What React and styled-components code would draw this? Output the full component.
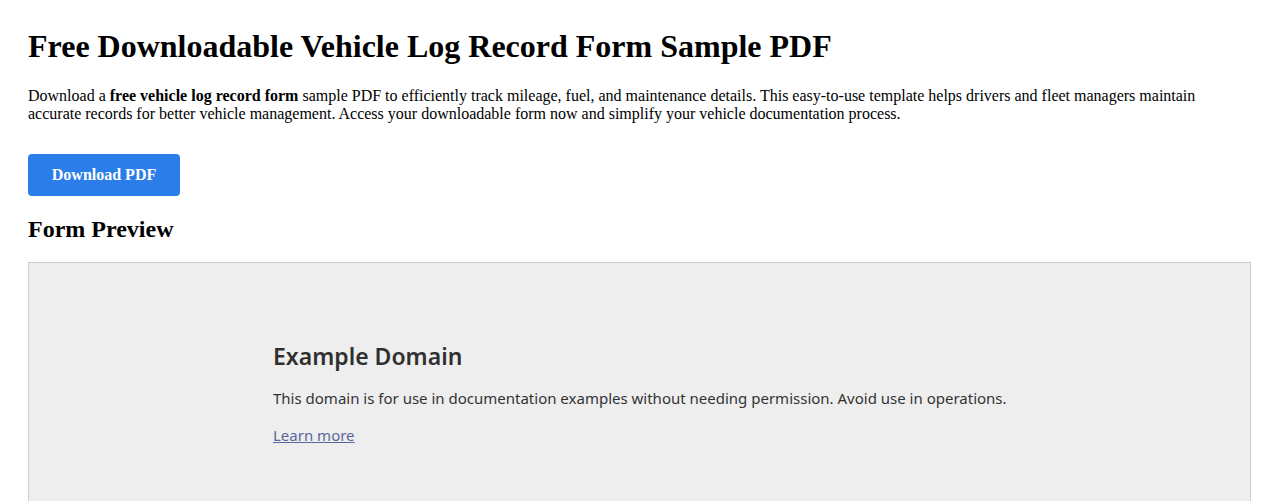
import React from "react";
import styled, { createGlobalStyle } from "styled-components";

const GlobalStyle = createGlobalStyle`
  html, body {
    margin: 0;
    padding: 0;
    background: #fff;
  }
  body {
    font-family: "Liberation Serif", "Times New Roman", serif;
    color: #000;
  }
`;

const App = () => {
  return (
    <>
      <GlobalStyle />
      <Page>
        <Title>Free Downloadable Vehicle Log Record Form Sample PDF</Title>
        <Intro>
          Download a <strong>free vehicle log record form</strong> sample PDF to
          efficiently track mileage, fuel, and maintenance details. This
          easy-to-use template helps drivers and fleet managers maintain
          accurate records for better vehicle management. Access your
          downloadable form now and simplify your vehicle documentation process.
        </Intro>
        <DownloadButton type="button">Download PDF</DownloadButton>
        <SectionTitle>Form Preview</SectionTitle>
        <Preview>
          <PreviewBody>
            <DomainTitle>Example Domain</DomainTitle>
            <DomainText>
              This domain is for use in documentation examples without needing
              permission. Avoid use in operations.
            </DomainText>
            <DomainText>
              <DomainLink href="#">Learn more</DomainLink>
            </DomainText>
          </PreviewBody>
        </Preview>
      </Page>
    </>
  );
};

const Page = styled.main`
  padding: 28px 27px 0 28px;
`;

const Title = styled.h1`
  margin: 0 0 22px;
  font-size: 32px;
  line-height: 37px;
  font-weight: bold;
`;

const Intro = styled.p`
  margin: 0 0 31px;
  font-size: 16px;
  line-height: 18px;
  max-width: 1180px;
`;

const DownloadButton = styled.button`
  display: block;
  width: 152px;
  height: 42px;
  border: none;
  border-radius: 4px;
  background: #2b7de9;
  color: #fff;
  font-family: "Liberation Serif", "Times New Roman", serif;
  font-size: 16px;
  font-weight: bold;
  cursor: pointer;
`;

const SectionTitle = styled.h2`
  margin: 19px 0 19px;
  font-size: 24px;
  line-height: 28px;
  font-weight: bold;
`;

const Preview = styled.div`
  border: 1px solid #ccc;
  background: #eee;
  height: 500px;
  overflow: hidden;
`;

const PreviewBody = styled.div`
  width: 780px;
  margin: 75px 0 0 244px;
  font-family: "Noto Sans", "Open Sans", sans-serif;
  opacity: 0.8;
`;

const DomainTitle = styled.h2`
  margin: 0 0 12px;
  font-size: 23px;
  line-height: 36px;
  font-weight: 600;
  color: #000;
`;

const DomainText = styled.p`
  margin: 0 0 13px;
  font-size: 15px;
  line-height: 24px;
  color: #000;
`;

const DomainLink = styled.a`
  color: #348;
`;

export default App;
